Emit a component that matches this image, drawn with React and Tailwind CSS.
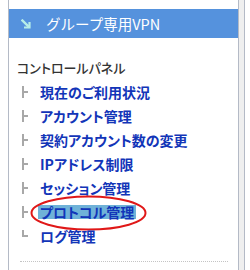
import React from "react";

const items = [
  "現在のご利用状況",
  "アカウント管理",
  "契約アカウント数の変更",
  "IPアドレス制限",
  "セッション管理",
  "プロトコル管理",
  "ログ管理",
];

function Tree({ last }) {
  return (
    <span className="relative w-[7px] h-[12px] shrink-0">
      <span
        className={
          "absolute left-[2px] top-0 w-[2px] bg-[#a8a8a8] " +
          (last ? "h-[7px]" : "h-[12px]")
        }
      />
      <span className="absolute left-[4px] top-[5px] w-[4px] h-[2px] bg-[#a8a8a8]" />
    </span>
  );
}

export default function App() {
  return (
    <div
      className="w-[250px] h-[270px] bg-white flex overflow-hidden"
      style={{ fontFamily: '"Noto Sans CJK JP", "Noto Sans", sans-serif' }}
    >
      <div className="w-[8px] shrink-0" />
      <div className="w-[231px] shrink-0 border-l border-r border-[#b4bac6] flex flex-col pt-[9px]">
        <div className="h-[29px] bg-[#5592dd] flex items-center pl-[12px]">
          <svg width="10" height="10" viewBox="0 0 10 10" className="shrink-0">
            <path d="M1.5 1.5 L7.5 7.5" stroke="#b6eee8" strokeWidth="2.4" strokeLinecap="square" />
            <path d="M8.5 3 V8.5 H3" stroke="#b6eee8" strokeWidth="2.2" fill="none" />
          </svg>
          <span className="ml-[15px] text-white text-[14.5px] leading-[18px]">
            グループ専用VPN
          </span>
        </div>
        <div className="h-[24px] mt-[18px] pl-[8px] flex items-center text-[13px] text-[#333333] font-medium [font-feature-settings:'palt']">
          コントロールパネル
        </div>
        {items.map((t, i) => (
          <div key={t} className="h-[24px] relative flex items-center pl-[11px] [font-feature-settings:'palt']">
            <Tree last={i === items.length - 1} />
            {i === 5 ? (
              <span className="ml-[11px] -mr-[2px] px-[2px] bg-[#6fb2d8] text-[#1235b8] text-[14px] leading-[14px] font-bold">
                {t}
              </span>
            ) : (
              <span className="ml-[13px] text-[#1235b8] text-[14px] leading-[18px] font-bold">
                {t}
              </span>
            )}
            {i === 5 && (
              <svg
                className="absolute left-[21px] top-[-5px] pointer-events-none"
                width="117"
                height="36"
                viewBox="0 0 117 36"
              >
                <ellipse cx="58.5" cy="18" rx="57" ry="16.5" fill="none" stroke="#e01818" strokeWidth="2" />
              </svg>
            )}
          </div>
        ))}
        <div className="mt-[13px] ml-[11px] mr-[10px] border-t border-dotted border-[#c4c4c4]" />
      </div>
      <div className="w-[5px] shrink-0 bg-[#efefef]" />
      <div className="w-px shrink-0 bg-[#b4bac6]" />
    </div>
  );
}
